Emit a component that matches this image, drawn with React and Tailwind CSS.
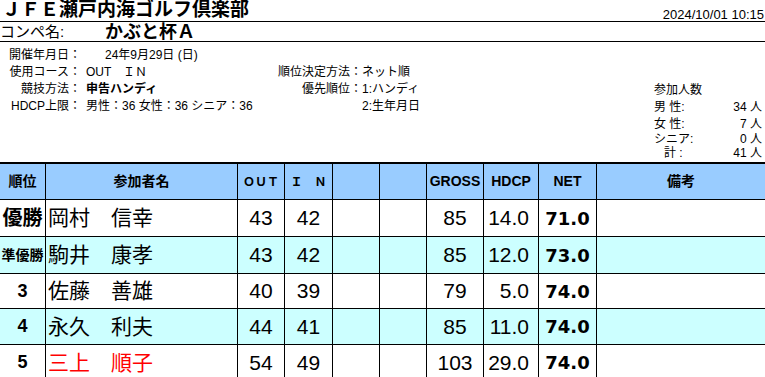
import React from 'react';

const widths = ['w-[46px]', 'w-[192px]', 'w-[47px]', 'w-[48px]', 'w-[47px]', 'w-[47px]', 'w-[57px]', 'w-[55px]', 'w-[58px]', 'w-[168px]'];

const players = [
    {rank: '優勝', name: '岡村　信幸', out: 43, inn: 42, gross: 85, hdcp: '14.0', net: '71.0', h: 'h-[37px]', bg: 'bg-white'},
    {rank: '準優勝', name: '駒井　康孝', out: 43, inn: 42, gross: 85, hdcp: '12.0', net: '73.0', h: 'h-[37px]', bg: 'bg-[#CCFFFF]'},
    {rank: '3', name: '佐藤　善雄', out: 40, inn: 39, gross: 79, hdcp: '5.0', net: '74.0', h: 'h-[35px]', bg: 'bg-white'},
    {rank: '4', name: '永久　利夫', out: 44, inn: 41, gross: 85, hdcp: '11.0', net: '74.0', h: 'h-[36px]', bg: 'bg-[#CCFFFF]'},
    {rank: '5', name: '三上　順子', out: 54, inn: 49, gross: 103, hdcp: '29.0', net: '74.0', h: 'h-[36px]', bg: 'bg-white', red: true},
];

function Cell({i, className = '', children}) {
    const last = i === widths.length - 1;
    return (
        <div className={`${widths[i]} shrink-0 h-full flex items-center ${last ? '' : 'border-r border-black'} ${className}`}>
            {children}
        </div>
    );
}

function InfoRow({label, value, valueClass = 'pl-[5px]', label2, value2}) {
    return (
        <div className="flex h-[17px] items-center text-[12px] leading-[17px] whitespace-nowrap">
            <div className="w-[81px] text-right">{label}</div>
            <div className={`w-[181px] ${valueClass}`}>{value}</div>
            <div className="w-[100px] text-right">{label2}</div>
            <div>{value2}</div>
        </div>
    );
}

function CountRow({label, value, h}) {
    return (
        <div className={`flex ${h} items-center justify-between text-[12px] leading-none pr-[3px]`}>
            <span>{label}</span>
            <span>{value}</span>
        </div>
    );
}

export default function App() {
    return (
        <div className="w-[765px] h-[377px] overflow-hidden bg-white text-black font-['Liberation_Sans','Noto_Sans_CJK_JP',sans-serif]">

            {/* title */}
            <div className="flex h-[22px] items-start justify-between border-b border-black">
                <div className="pl-[2px] text-[19px] font-bold leading-[20px]">ＪＦＥ瀬戸内海ゴルフ倶楽部</div>
                <div className="pr-[1px] pt-[8px] text-[13px] leading-[13px]">2024/10/01 10:15</div>
            </div>

            {/* competition */}
            <div className="flex h-[20px] items-center border-b border-black">
                <div className="w-[105px] text-[15px] leading-none">コンペ名:</div>
                <div className="text-[18px] font-bold leading-none">かぶと杯Ａ</div>
            </div>

            {/* info */}
            <div className="flex h-[120px]">
                <div className="flex-1 pt-[5px]">
                    <InfoRow label="開催年月日：" value="24年9月29日 (日)" valueClass="pl-[24px]"/>
                    <InfoRow label="使用コース：" value="OUT　ＩＮ" label2="順位決定方法：" value2="ネット順"/>
                    <InfoRow label="競技方法：" value={<span className="font-bold">申告ハンディ</span>} label2="優先順位：" value2="1:ハンディ"/>
                    <InfoRow label="HDCP上限：" value="男性：36 女性：36 シニア：36" value2="2:生年月日"/>
                </div>
                <div className="w-[111px] pt-[39px]">
                    <CountRow label="参加人数" h="h-[17px]"/>
                    <CountRow label="男 性:" value="34 人" h="h-[18px]"/>
                    <CountRow label="女 性:" value="7 人" h="h-[16px]"/>
                    <CountRow label="シニア:" value="0 人" h="h-[14px]"/>
                    <CountRow label={<span className="pl-[10px]">計 :</span>} value="41 人" h="h-[14px]"/>
                </div>
            </div>

            {/* table */}
            <div className="border-t-2 border-black">
                <div className="flex h-[36px] border-b border-black bg-[#99CCFF] text-[14px] font-bold">
                    <Cell i={0} className="justify-center">順位</Cell>
                    <Cell i={1} className="justify-center">参加者名</Cell>
                    <Cell i={2} className="justify-center text-[12px]">ＯＵＴ</Cell>
                    <Cell i={3} className="justify-center text-[12px]">Ｉ　Ｎ</Cell>
                    <Cell i={4}/>
                    <Cell i={5}/>
                    <Cell i={6} className="justify-center">GROSS</Cell>
                    <Cell i={7} className="justify-center">HDCP</Cell>
                    <Cell i={8} className="justify-center">NET</Cell>
                    <Cell i={9} className="justify-center">備考</Cell>
                </div>

                {players.map((p) => (
                    <div key={p.name} className={`flex ${p.h} ${p.bg} border-b border-black`}>
                        <Cell i={0} className={`justify-center font-bold whitespace-nowrap ${p.rank === '準優勝' ? 'text-[14px]' : p.rank === '優勝' ? 'text-[20px]' : 'text-[18px]'}`}>
                            {p.rank}
                        </Cell>
                        <Cell i={1} className={`pl-[2px] text-[21px] ${p.red ? 'text-[#FF0000]' : ''}`}>{p.name}</Cell>
                        <Cell i={2} className="justify-center text-[21px]">{p.out}</Cell>
                        <Cell i={3} className="justify-center text-[21px]">{p.inn}</Cell>
                        <Cell i={4}/>
                        <Cell i={5}/>
                        <Cell i={6} className="justify-center text-[21px]">{p.gross}</Cell>
                        <Cell i={7} className="justify-end pr-[9px] text-[21px]">{p.hdcp}</Cell>
                        <Cell i={8} className="justify-center text-[18px] font-bold font-['DejaVu_Sans',sans-serif]">{p.net}</Cell>
                        <Cell i={9}/>
                    </div>
                ))}
            </div>
        </div>
    );
}
